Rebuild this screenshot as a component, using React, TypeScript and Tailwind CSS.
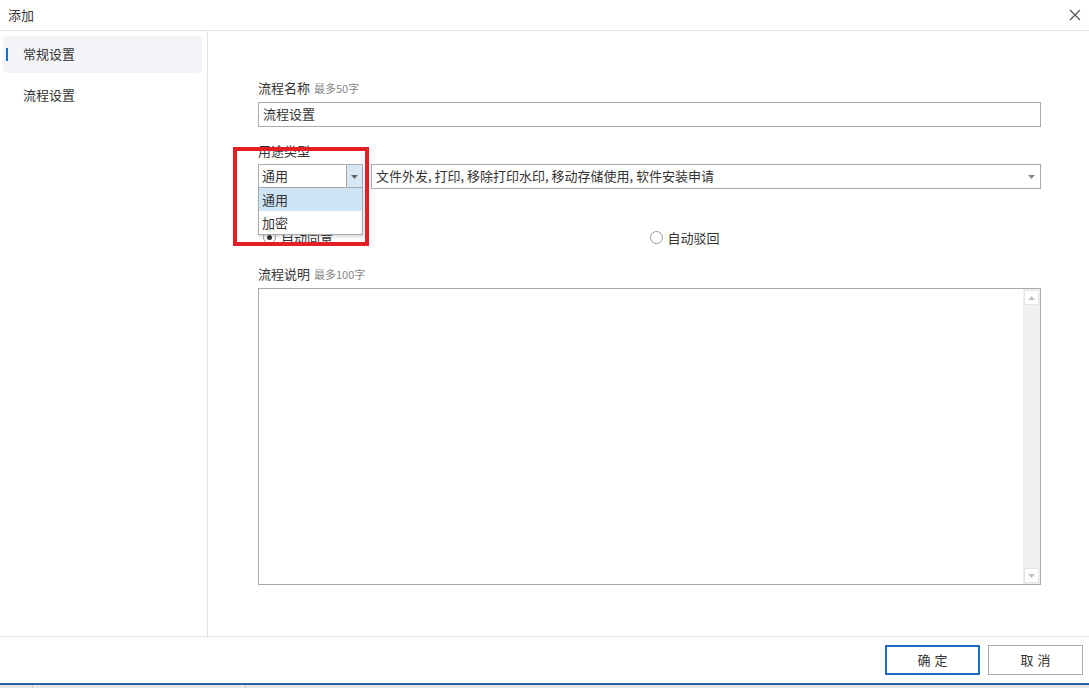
import React from "react";

const font = { fontFamily: '"Microsoft YaHei", "Noto Sans CJK SC", "Noto Sans", sans-serif' };

function Caret({ color = "#666" }: { color?: string }) {
    return (
        <svg width="7" height="4" viewBox="0 0 7 4">
            <path d="M0 0 L7 0 L3.5 4 Z" fill={color} />
        </svg>
    );
}

function Radio({ checked, label }: { checked?: boolean; label: string }) {
    return (
        <label className="flex items-center gap-[5px] text-[13px] text-[#333]">
            <span className="w-[13px] h-[13px] rounded-full border border-[#999] bg-white flex items-center justify-center">
                {checked && <span className="w-[5px] h-[5px] rounded-full bg-[#333]" />}
            </span>
            {label}
        </label>
    );
}

export default function App() {
    return (
        <div className="w-[1089px] h-[688px] flex flex-col bg-white text-[#333] overflow-hidden" style={font}>
            {/* title bar */}
            <header className="h-[31px] shrink-0 border-b border-[#e2e2e2] flex items-center justify-between pl-[8px] pr-[8px] pb-[1px]">
                <span className="text-[13px] text-[#333]">添加</span>
                <svg width="12" height="12" viewBox="0 0 12 12">
                    <path d="M1 1 L11 11 M11 1 L1 11" stroke="#555" strokeWidth="1.3" />
                </svg>
            </header>

            <div className="flex-1 flex min-h-0">
                {/* sidebar */}
                <aside className="w-[208px] shrink-0 border-r border-[#e2e2e2] pt-[5px] pl-[3px] pr-[5px] flex flex-col gap-[4px]">
                    <div className="relative h-[37px] rounded-[4px] bg-[#f3f4f7] flex items-center pl-[20px] pb-[1px] text-[13px]">
                        <span className="absolute left-[3px] top-[12px] w-[2px] h-[13px] bg-[#1a6fc4]" />
                        常规设置
                    </div>
                    <div className="h-[37px] flex items-center pl-[20px] pb-[1px] text-[13px]">流程设置</div>
                </aside>

                {/* main */}
                <main className="relative flex-1 pl-[50px] pr-[48px] pt-[48px]">
                    <div className="h-[18px] flex items-center gap-[4px] text-[13px]">
                        流程名称 <span className="text-[11px] text-[#888]">最多50字</span>
                    </div>
                    <div className="mt-[5px] h-[25px] border border-[#aaa] flex items-center px-[4px] pb-[1px] text-[13px]">流程设置</div>

                    <div className="mt-[15px] h-[18px] flex items-center text-[13px]">用途类型</div>
                    <div className="mt-[4px] flex gap-[8px]">
                        <div className="w-[105px] h-[25px] border border-[#aaa] flex items-stretch text-[13px]">
                            <span className="flex-1 flex items-center pl-[3px] pb-[1px]">通用</span>
                            <span className="w-[16px] border-l border-[#aaa] bg-[#d6e7f6] flex items-center justify-center">
                                <Caret />
                            </span>
                        </div>
                        <div className="flex-1 h-[25px] border border-[#aaa] flex items-center justify-between pl-[4px] pr-[5px] text-[13px]">
                            <span className="pb-[1px]">文件外发, 打印, 移除打印水印, 移动存储使用, 软件安装申请</span>
                            <Caret color="#888" />
                        </div>
                    </div>

                    <div className="mt-[39px] h-[18px] grid grid-cols-2">
                        <div className="pl-[5px]"><Radio checked label="自动同意" /></div>
                        <div><Radio label="自动驳回" /></div>
                    </div>

                    <div className="mt-[19px] h-[18px] flex items-center gap-[4px] text-[13px]">
                        流程说明 <span className="text-[11px] text-[#888]">最多100字</span>
                    </div>
                    <div className="mt-[5px] h-[297px] border border-[#aaa] flex justify-end">
                        <div className="w-[17px] bg-[#f0f0f0] flex flex-col justify-between p-[1px]">
                            <div className="h-[15px] bg-white border border-[#e4e4e4] flex items-center justify-center">
                                <svg width="7" height="4" viewBox="0 0 7 4"><path d="M0 4 L7 4 L3.5 0 Z" fill="#c2c2c2" /></svg>
                            </div>
                            <div className="h-[15px] bg-white border border-[#e4e4e4] flex items-center justify-center">
                                <Caret color="#c2c2c2" />
                            </div>
                        </div>
                    </div>

                    {/* open dropdown */}
                    <div className="absolute left-[50px] top-[156px] w-[105px] border border-[#aaa] bg-white shadow-[1px_2px_3px_rgba(0,0,0,0.15)] text-[13px]">
                        <div className="h-[23px] bg-[#cde4f7] flex items-center pl-[3px]">通用</div>
                        <div className="h-[23px] flex items-center pl-[3px]">加密</div>
                    </div>

                    {/* red annotation */}
                    <div className="absolute left-[25px] top-[116px] w-[136px] h-[99px] border-[4px] border-[#e31e24] pointer-events-none" />
                </main>
            </div>

            {/* footer */}
            <footer className="h-[47px] shrink-0 border-t border-[#e2e2e2] flex items-start justify-end gap-[8px] pr-[6px] pt-[8px]">
                <button className="w-[95px] h-[30px] border-2 border-[#1a6fc4] bg-white text-[13px] text-[#333] tracking-[4px] pl-[4px]">确定</button>
                <button className="w-[95px] h-[30px] border border-[#aaa] bg-white text-[13px] text-[#333] tracking-[4px] pl-[4px]">取消</button>
            </footer>

            {/* taskbar glimpse */}
            <div className="h-[5px] shrink-0 border-t-2 border-[#2a62a3] bg-[#e6e6e6] flex">
                <div className="w-[33px] border-r border-[#c8c8c8]" />
                <div className="w-[213px] border-r border-[#c8c8c8]" />
            </div>
        </div>
    );
}
